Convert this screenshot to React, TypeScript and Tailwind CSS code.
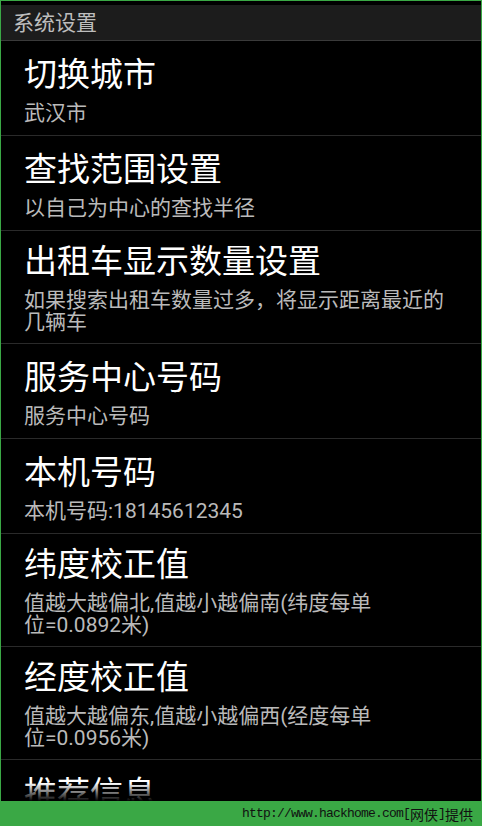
import React from "react";

type Item = { title: string; summary: string[] };

const items: Item[] = [
  { title: "切换城市", summary: ["武汉市"] },
  { title: "查找范围设置", summary: ["以自己为中心的查找半径"] },
  { title: "出租车显示数量设置", summary: ["如果搜索出租车数量过多，将显示距离最近的", "几辆车"] },
  { title: "服务中心号码", summary: ["服务中心号码"] },
  { title: "本机号码", summary: ["本机号码:18145612345"] },
  { title: "纬度校正值", summary: ["值越大越偏北,值越小越偏南(纬度每单", "位=0.0892米)"] },
  { title: "经度校正值", summary: ["值越大越偏东,值越小越偏西(经度每单", "位=0.0956米)"] },
];

function Row({ item }: { item: Item }) {
  const multi = item.summary.length > 1;
  return (
    <div
      className={
        multi
          ? "flex min-h-[95px] flex-col border-b border-[#2a2a2a] pl-[23px] pr-[20px] pt-[11px] pb-[10px]"
          : "flex min-h-[95px] flex-col border-b border-[#2a2a2a] pl-[23px] pr-[20px] pt-[14px] pb-[10px]"
      }
    >
      <div className="whitespace-nowrap text-[33px] leading-[40px] text-white">{item.title}</div>
      <div className="mt-[7px] text-[21px] leading-[22px] text-[#bababa]">
        {item.summary.map((s, i) => (
          <div key={i} className="whitespace-nowrap">
            {s}
          </div>
        ))}
      </div>
    </div>
  );
}

export default function App() {
  return (
    <div className="flex h-[826px] w-[482px] flex-col overflow-hidden border-x border-t border-[#3aa845] bg-black font-[family-name:Roboto,'Noto_Sans_CJK_SC',sans-serif]">
      <div className="h-[4px] shrink-0 bg-black" />
      <div className="flex h-[36px] shrink-0 items-center border-b border-[#3a3a3a] bg-[#1c1c1c] pl-[12px] text-[21px] leading-[24px] text-[#bdbdbd]">
        系统设置
      </div>
      <div className="relative min-h-0 flex-1 overflow-hidden">
        {items.map((it) => (
          <Row key={it.title} item={it} />
        ))}
        <div className="pl-[23px] pt-[14px]">
          <div className="whitespace-nowrap text-[33px] leading-[40px] text-white">推荐信息</div>
        </div>
        <div className="pointer-events-none absolute bottom-0 left-0 right-0 h-[18px] bg-gradient-to-b from-transparent to-black" />
      </div>
      <div className="-mx-px flex h-[25px] shrink-0 items-center justify-end bg-[#3aa845] pr-[9px] text-[#111]">
        <span className="font-[family-name:'Liberation_Mono',monospace] text-[13px] tracking-[-0.8px]">
          http://www.hackhome.com[
        </span>
        <span className="font-[family-name:'Noto_Sans_CJK_SC',sans-serif] text-[14px] leading-[16px]">网侠</span>
        <span className="font-[family-name:'Liberation_Mono',monospace] text-[13px] tracking-[-0.8px]">]</span>
        <span className="font-[family-name:'Noto_Sans_CJK_SC',sans-serif] text-[14px] leading-[16px]">提供</span>
      </div>
    </div>
  );
}
